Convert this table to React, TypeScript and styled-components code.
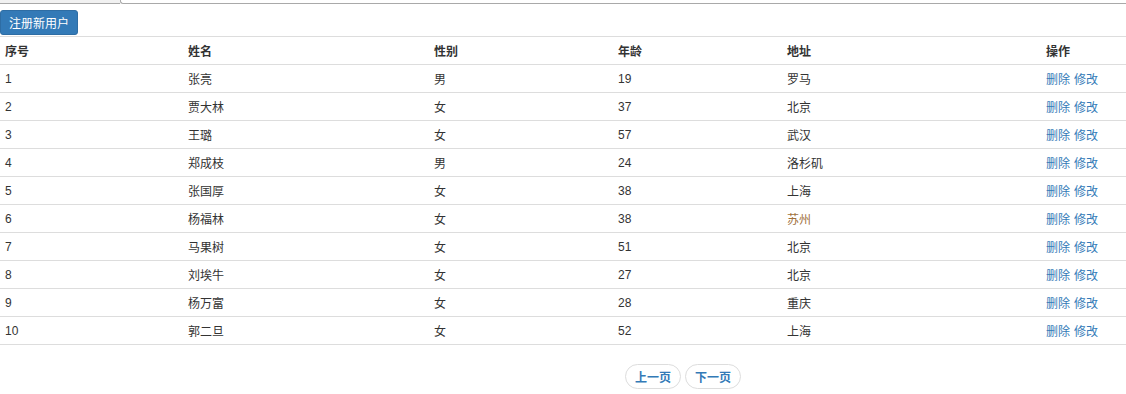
import styled, { createGlobalStyle } from 'styled-components';

const GlobalStyle = createGlobalStyle`
  body {
    margin: 0;
    background: #fff;
    font-family: "Liberation Sans", "Noto Sans CJK SC", sans-serif;
    font-size: 12px;
    color: #333;
  }
`;

const TopStrip = styled.div`
  display: flex;
  height: 4px;
`;

const StripLeft = styled.div`
  width: 120px;
  background: #f1f1f1;
  border-bottom: 1px solid #a9a9a9;
`;

const StripBox = styled.div`
  flex: 1;
  background: #fff;
  border-left: 1px solid #a9a9a9;
  border-bottom: 1px solid #a9a9a9;
  border-bottom-left-radius: 3px;
`;

const Toolbar = styled.div`
  padding-top: 6px;
  padding-bottom: 1px;
`;

const PrimaryButton = styled.button`
  height: 25px;
  padding: 0 8px;
  background: #337ab7;
  border: 1px solid #2e6da4;
  border-radius: 3px;
  color: #fff;
  font-family: "Liberation Sans", "Noto Sans CJK SC", sans-serif;
  font-size: 12px;
  cursor: pointer;
`;

const Table = styled.table`
  width: 100%;
  border-collapse: collapse;
`;

const HeadCell = styled.th<{ $w?: number }>`
  width: ${(p) => (p.$w ? `${p.$w}px` : 'auto')};
  height: 27px;
  padding: 0 5px;
  text-align: left;
  font-weight: bold;
  border-top: 1px solid #ddd;
  border-bottom: 1px solid #ddd;
`;

const Cell = styled.td<{ $tint?: string }>`
  height: 27px;
  padding: 0 5px;
  border-bottom: 1px solid #ddd;
  color: ${(p) => p.$tint || '#333'};
`;

const Link = styled.a`
  color: #337ab7;
  text-decoration: none;
  margin-right: 4px;
  cursor: pointer;
`;

const Pager = styled.div`
  display: flex;
  justify-content: center;
  gap: 4px;
  padding-top: 19px;
  padding-left: 240px;
`;

const PageButton = styled.button`
  width: 56px;
  height: 25px;
  padding: 0;
  background: #fff;
  border: 1px solid #ddd;
  border-radius: 13px;
  color: #337ab7;
  font-family: "Liberation Sans", "Noto Sans CJK SC", sans-serif;
  font-size: 12px;
  font-weight: bold;
  cursor: pointer;
`;

type User = { name: string; sex: string; age: number; city: string; tint?: string };

const users: User[] = [
  { name: '张亮', sex: '男', age: 19, city: '罗马' },
  { name: '贾大林', sex: '女', age: 37, city: '北京' },
  { name: '王璐', sex: '女', age: 57, city: '武汉' },
  { name: '郑成枝', sex: '男', age: 24, city: '洛杉矶' },
  { name: '张国厚', sex: '女', age: 38, city: '上海' },
  { name: '杨福林', sex: '女', age: 38, city: '苏州', tint: '#a0703c' },
  { name: '马果树', sex: '女', age: 51, city: '北京' },
  { name: '刘埃牛', sex: '女', age: 27, city: '北京' },
  { name: '杨万富', sex: '女', age: 28, city: '重庆' },
  { name: '郭二旦', sex: '女', age: 52, city: '上海' },
];

export default function App() {
  return (
    <>
      <GlobalStyle />
      <TopStrip>
        <StripLeft />
        <StripBox />
      </TopStrip>
      <Toolbar>
        <PrimaryButton>注册新用户</PrimaryButton>
      </Toolbar>
      <Table>
        <thead>
          <tr>
            <HeadCell $w={173}>序号</HeadCell>
            <HeadCell $w={236}>姓名</HeadCell>
            <HeadCell $w={174}>性别</HeadCell>
            <HeadCell $w={159}>年龄</HeadCell>
            <HeadCell $w={249}>地址</HeadCell>
            <HeadCell>操作</HeadCell>
          </tr>
        </thead>
        <tbody>
          {users.map((u, i) => (
            <tr key={i}>
              <Cell>{i + 1}</Cell>
              <Cell>{u.name}</Cell>
              <Cell>{u.sex}</Cell>
              <Cell>{u.age}</Cell>
              <Cell $tint={u.tint}>{u.city}</Cell>
              <Cell>
                <Link>删除</Link>
                <Link>修改</Link>
              </Cell>
            </tr>
          ))}
        </tbody>
      </Table>
      <Pager>
        <PageButton>上一页</PageButton>
        <PageButton>下一页</PageButton>
      </Pager>
    </>
  );
}
